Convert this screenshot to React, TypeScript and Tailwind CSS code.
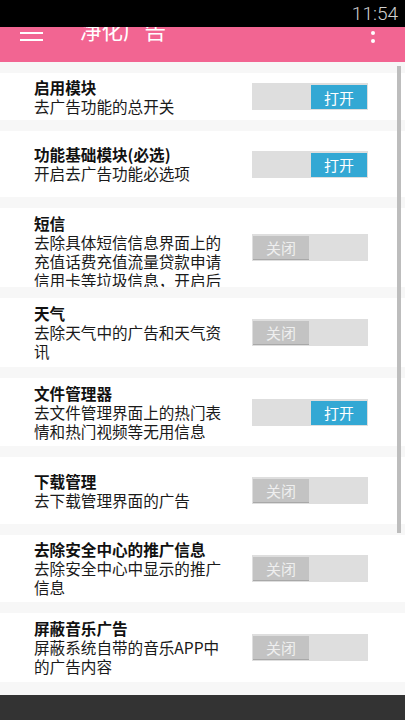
import React from 'react'

type Item = {
  title: string
  desc: string
  on: boolean
  h: string
  clip?: boolean
}

const items: Item[] = [
  { title: '启用模块', desc: '去广告功能的总开关', on: true, h: 'h-[47px]' },
  { title: '功能基础模块(必选)', desc: '开启去广告功能必选项', on: true, h: 'h-[66px]' },
  {
    title: '短信',
    desc: '去除具体短信信息界面上的充值话费充值流量贷款申请信用卡等垃圾信息，开启后会影响部分短信的显示',
    on: false,
    h: 'h-[79px]',
    clip: true
  },
  { title: '天气', desc: '去除天气中的广告和天气资讯', on: false, h: 'h-[69px]' },
  { title: '文件管理器', desc: '去文件管理界面上的热门表情和热门视频等无用信息', on: true, h: 'h-[68px]' },
  { title: '下载管理', desc: '去下载管理界面的广告', on: false, h: 'h-[67px]' },
  { title: '去除安全中心的推广信息', desc: '去除安全中心中显示的推广信息', on: false, h: 'h-[67px]' },
  { title: '屏蔽音乐广告', desc: '屏蔽系统自带的音乐APP中的广告内容', on: false, h: 'h-[69px]' }
]

const font = { fontFamily: '"Noto Sans CJK SC", "Noto Sans", sans-serif' }

const Toggle = ({ on }: { on: boolean }) => (
  <div
    className={`w-[116px] h-[27px] bg-[#dedede] flex pt-[2px] pb-[1px] px-[1px] ${on ? 'justify-end' : 'justify-start'}`}
  >
    <div
      className={`w-[56px] h-full flex items-center justify-center text-[15px] leading-none ${
        on ? 'bg-[#33a8d4] text-white' : 'bg-[#c3c3c3] text-[#efefef] border-b border-[#a8a8a8]'
      }`}
    >
      {on ? '打开' : '关闭'}
    </div>
  </div>
)

export default function App() {
  return (
    <div className="w-[405px] h-[720px] flex flex-col overflow-hidden bg-[#f7f7f7]" style={font}>
      {/* status bar */}
      <div className="relative z-10 h-[27px] bg-black flex items-center justify-end pr-[7px] shrink-0">
        <span
          className="text-[19px] font-light text-[#d0d0d0] leading-none"
          style={{ fontFamily: 'Roboto, "Liberation Sans", sans-serif' }}
        >
          11:54
        </span>
      </div>

      {/* toolbar, tucked under the status bar */}
      <div className="-mt-[23px] h-[58px] bg-[#f26592] flex items-center shrink-0">
        <div className="w-[23px] ml-[20px] flex flex-col gap-[4.5px]">
          <div className="h-[2.5px] bg-white" />
          <div className="h-[2.5px] bg-white" />
          <div className="h-[2.5px] bg-white" />
        </div>
        <span className="ml-[37px] mb-[6px] text-[21.5px] text-white leading-none">净化广告</span>
        <div className="ml-auto mr-[30px] flex flex-col gap-[4px]">
          <div className="w-[4px] h-[4px] rounded-full bg-white" />
          <div className="w-[4px] h-[4px] rounded-full bg-white" />
          <div className="w-[4px] h-[4px] rounded-full bg-white" />
        </div>
      </div>

      {/* list */}
      <div className="relative flex-1 overflow-hidden">
        <div className="flex flex-col gap-[11px] pt-[11px]">
          {items.map((it) => (
            <div key={it.title} className={`${it.h} bg-white flex items-center overflow-hidden shrink-0`}>
              <div
                className={`w-[196px] ml-[34px] self-stretch flex flex-col overflow-hidden ${
                  it.clip ? 'justify-start pt-[6px]' : 'justify-center'
                }`}
              >
                <div className="text-[15.6px] leading-[19px] font-bold text-[#111]">{it.title}</div>
                <div className="text-[15.6px] leading-[19px] text-[#1a1a1a]">{it.desc}</div>
              </div>
              <div className="ml-[22px]">
                <Toggle on={it.on} />
              </div>
            </div>
          ))}
        </div>
        {/* scrollbar */}
        <div className="absolute right-[4px] top-[4px] w-[4px] h-[467px] bg-[#bdbdbd]" />
      </div>

      {/* bottom bar */}
      <div className="h-[25px] bg-[#333333] shrink-0" />
    </div>
  )
}
